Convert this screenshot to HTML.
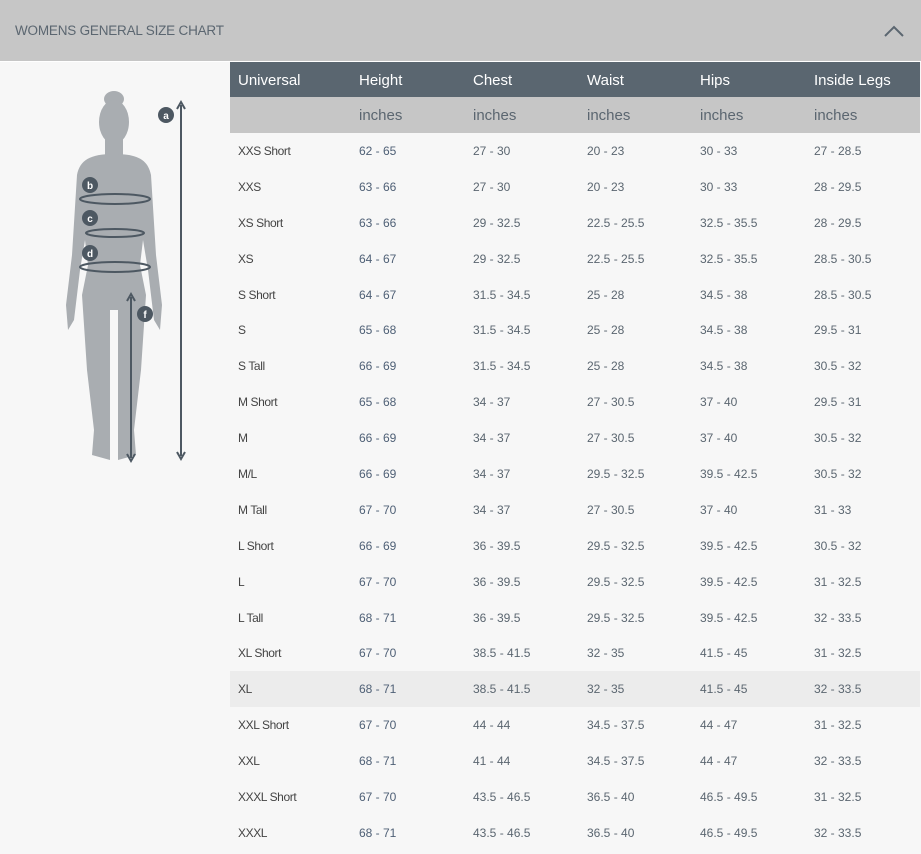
<!DOCTYPE html>
<html><head><meta charset="utf-8"><style>
*{margin:0;padding:0;box-sizing:border-box}
body{width:921px;height:854px;background:#f7f7f7;font-family:"Liberation Sans",sans-serif;overflow:hidden;position:relative}
.top{position:absolute;left:0;top:0;width:921px;height:62px;background:#c6c6c6;border-bottom:1px solid #fff}
.top h1{position:absolute;left:15px;top:23px;font-size:13.5px;font-weight:normal;color:#5b6670;letter-spacing:-0.2px}
.chev{position:absolute;left:884px;top:25px}
table{position:absolute;left:230px;top:62px;width:690px;border-collapse:collapse}
td,th{padding:0 0 0 8px;text-align:left;white-space:nowrap}
th{background:#5a6670;color:#fff;font-weight:normal;font-size:15px;height:35px;padding-top:2px}
tr.u td{background:#c6c6c6;color:#5b6670;font-size:15px;height:36px}
tr.r td{height:35.9px;font-size:12px;color:#5b6670}
tr.r td:first-child{color:#444;letter-spacing:-0.4px}
tr.r td:nth-child(2){color:#4f6076}
tr.h td{background:#ececec}
</style></head><body>
<div class="top"><h1>WOMENS GENERAL SIZE CHART</h1>
<svg class="chev" width="20" height="12" viewBox="0 0 20 12"><path d="M1 11 L10 2 L19 11" fill="none" stroke="#5b6670" stroke-width="2"/></svg></div>
<svg style="position:absolute;left:50px;top:80px" width="160" height="390" viewBox="0 0 160 390">
<g fill="#a9adb1">
<ellipse cx="64" cy="19" rx="10" ry="8"/>
<ellipse cx="64" cy="42" rx="15" ry="22"/>
<rect x="55" y="58" width="18" height="20"/>
<path d="M64 74 C40 74 30 80 27 95 L22 175 L16 225 L18 250 L24 240 L30 190 L35 160 L38 185 L32 215 L37 290 L44 350 L42 375 L60 380 L60 230 L68 230 L68 380 L86 375 L84 350 L91 290 L96 215 L90 185 L93 160 L98 190 L104 240 L110 250 L112 225 L106 175 L101 95 C98 80 88 74 64 74Z"/>
</g>
<g fill="none" stroke="#4d5862" stroke-width="2">
<line x1="131" y1="25" x2="131" y2="376"/>
<path d="M127 29 L131 22 L135 29 M127 372 L131 379 L135 372"/>
<line x1="81" y1="217" x2="81" y2="378"/>
<path d="M77 221 L81 214 L85 221 M77 374 L81 381 L85 374"/>
<ellipse cx="65" cy="119" rx="35" ry="5"/>
<ellipse cx="65" cy="153" rx="29" ry="4"/>
<ellipse cx="65" cy="187" rx="35" ry="5"/>
</g>
<g fill="#4d5862"><circle cx="116" cy="35" r="8"/><circle cx="40" cy="105" r="8"/><circle cx="40" cy="138" r="8"/><circle cx="40" cy="173" r="8"/><circle cx="95" cy="234" r="8"/></g>
<g fill="#fff" font-size="10" font-weight="bold" text-anchor="middle" font-family="Liberation Sans,sans-serif"><text x="116" y="39">a</text><text x="40" y="109">b</text><text x="40" y="142">c</text><text x="40" y="177">d</text><text x="95" y="238">f</text></g>
</svg>
<table>
<colgroup><col style="width:121px"><col style="width:114px"><col style="width:114px"><col style="width:113px"><col style="width:114px"><col style="width:114px"></colgroup>
<tr><th>Universal</th><th>Height</th><th>Chest</th><th>Waist</th><th>Hips</th><th>Inside Legs</th></tr>
<tr class="u"><td></td><td>inches</td><td>inches</td><td>inches</td><td>inches</td><td>inches</td></tr>
<tr class="r"><td>XXS Short</td><td>62 - 65</td><td>27 - 30</td><td>20 - 23</td><td>30 - 33</td><td>27 - 28.5</td></tr>
<tr class="r"><td>XXS</td><td>63 - 66</td><td>27 - 30</td><td>20 - 23</td><td>30 - 33</td><td>28 - 29.5</td></tr>
<tr class="r"><td>XS Short</td><td>63 - 66</td><td>29 - 32.5</td><td>22.5 - 25.5</td><td>32.5 - 35.5</td><td>28 - 29.5</td></tr>
<tr class="r"><td>XS</td><td>64 - 67</td><td>29 - 32.5</td><td>22.5 - 25.5</td><td>32.5 - 35.5</td><td>28.5 - 30.5</td></tr>
<tr class="r"><td>S Short</td><td>64 - 67</td><td>31.5 - 34.5</td><td>25 - 28</td><td>34.5 - 38</td><td>28.5 - 30.5</td></tr>
<tr class="r"><td>S</td><td>65 - 68</td><td>31.5 - 34.5</td><td>25 - 28</td><td>34.5 - 38</td><td>29.5 - 31</td></tr>
<tr class="r"><td>S Tall</td><td>66 - 69</td><td>31.5 - 34.5</td><td>25 - 28</td><td>34.5 - 38</td><td>30.5 - 32</td></tr>
<tr class="r"><td>M Short</td><td>65 - 68</td><td>34 - 37</td><td>27 - 30.5</td><td>37 - 40</td><td>29.5 - 31</td></tr>
<tr class="r"><td>M</td><td>66 - 69</td><td>34 - 37</td><td>27 - 30.5</td><td>37 - 40</td><td>30.5 - 32</td></tr>
<tr class="r"><td>M/L</td><td>66 - 69</td><td>34 - 37</td><td>29.5 - 32.5</td><td>39.5 - 42.5</td><td>30.5 - 32</td></tr>
<tr class="r"><td>M Tall</td><td>67 - 70</td><td>34 - 37</td><td>27 - 30.5</td><td>37 - 40</td><td>31 - 33</td></tr>
<tr class="r"><td>L Short</td><td>66 - 69</td><td>36 - 39.5</td><td>29.5 - 32.5</td><td>39.5 - 42.5</td><td>30.5 - 32</td></tr>
<tr class="r"><td>L</td><td>67 - 70</td><td>36 - 39.5</td><td>29.5 - 32.5</td><td>39.5 - 42.5</td><td>31 - 32.5</td></tr>
<tr class="r"><td>L Tall</td><td>68 - 71</td><td>36 - 39.5</td><td>29.5 - 32.5</td><td>39.5 - 42.5</td><td>32 - 33.5</td></tr>
<tr class="r"><td>XL Short</td><td>67 - 70</td><td>38.5 - 41.5</td><td>32 - 35</td><td>41.5 - 45</td><td>31 - 32.5</td></tr>
<tr class="r h"><td>XL</td><td>68 - 71</td><td>38.5 - 41.5</td><td>32 - 35</td><td>41.5 - 45</td><td>32 - 33.5</td></tr>
<tr class="r"><td>XXL Short</td><td>67 - 70</td><td>44 - 44</td><td>34.5 - 37.5</td><td>44 - 47</td><td>31 - 32.5</td></tr>
<tr class="r"><td>XXL</td><td>68 - 71</td><td>41 - 44</td><td>34.5 - 37.5</td><td>44 - 47</td><td>32 - 33.5</td></tr>
<tr class="r"><td>XXXL Short</td><td>67 - 70</td><td>43.5 - 46.5</td><td>36.5 - 40</td><td>46.5 - 49.5</td><td>31 - 32.5</td></tr>
<tr class="r"><td>XXXL</td><td>68 - 71</td><td>43.5 - 46.5</td><td>36.5 - 40</td><td>46.5 - 49.5</td><td>32 - 33.5</td></tr>
</table>
</body></html>
